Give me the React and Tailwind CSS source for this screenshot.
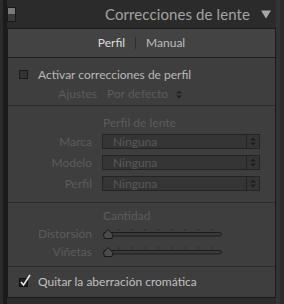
import React from "react";

const Updown = ({ color = "#1a1a1a" }) => (
  <svg width="6" height="9" viewBox="0 0 6 9">
    <path d="M0 3.5 L3 0.5 L6 3.5 Z" fill={color} />
    <path d="M0 5.5 L3 8.5 L6 5.5 Z" fill={color} />
  </svg>
);

const Select = () => (
  <div className="flex h-[15px] w-[158px] items-stretch border border-[#242424] bg-[#353535]">
    <div className="flex flex-1 items-center pl-[10px] text-[12px] leading-none text-[#595959]">Ninguna</div>
    <div className="flex w-[13px] items-center justify-center border-l border-[#242424]">
      <Updown color="#1e1e1e" />
    </div>
  </div>
);

const Slider = () => {
  const ticks = [];
  for (let i = 0; i < 8; i++) ticks.push(16.5 + i * 13.3);
  return (
    <svg width="122" height="14" viewBox="0 0 122 14">
      {ticks.map((x, i) => (
        <line key={i} x1={x} y1="2" x2={x} y2="4" stroke="#2a2a2a" strokeWidth="1" />
      ))}
      <rect x="1.5" y="5.5" width="118" height="3.5" rx="1.75" fill="#3a3a3a" stroke="#1c1c1c" strokeWidth="1" />
      <path d="M6 2.5 L1.5 7.5 L2.5 11.5 L10 11.5 L11 7.5 Z" fill="#4b4b4b" stroke="#191919" strokeWidth="1" strokeLinejoin="round" />
    </svg>
  );
};

const Row = ({ label, children, h }) => (
  <div className={`flex items-center ${h}`}>
    <div className="w-[84px] text-right text-[12px] text-[#5c5c5c]">{label}</div>
    <div className="ml-[10px] flex items-center">{children}</div>
  </div>
);

const Sep = () => <div className="h-[1px] bg-[#2c2c2c]" />;

export default function App() {
  return (
    <div
      className="relative h-[304px] w-[284px] overflow-hidden bg-[#2b2b2b]"
      style={{ fontFamily: "Lato, 'Open Sans', sans-serif" }}
    >
      <div className="ml-[3px] h-full w-[277px] border-l-[4px] border-[#1b1b1b] border-r-[4px] border-r-[#333333]">
        {/* header */}
        <div className="flex h-[28px] items-center">
          <div className="flex h-[15px] w-[9px] flex-col border border-[#1a1a1a]">
            <div className="h-[6px] bg-[#7a7a7a]" />
            <div className="flex-1 bg-[#3a3a3a]" />
          </div>
          <div className="ml-auto text-[15px] tracking-[0.1px] text-[#a3a3a3]">Correcciones de lente</div>
          <svg className="ml-[11px] mr-[5px]" width="10" height="9" viewBox="0 0 10 9">
            <path d="M0 0.5 L10 0.5 L5 8.5 Z" fill="#a8a8a8" />
          </svg>
        </div>
        {/* panel */}
        <div className="h-[270px] border border-[#1a1a1a] bg-[#3e3e3e]">
          <div className="flex h-[28px] items-center justify-center bg-[#434343] text-[12px]">
            <span className="text-[#dcdcdc]">Perfil</span>
            <span className="mx-[10px] h-[12px] w-[1px] bg-[#2e2e2e]" />
            <span className="text-[#bdbdbd]">Manual</span>
          </div>
          <div className="h-[1px] bg-[#1e1e1e]" />
          <div className="h-[47px]">
            <div className="flex h-[29px] items-center pt-[4px] pl-[11px]">
              <div className="h-[9px] w-[9px] border border-[#1a1a1a] bg-[#333333]" />
              <span className="ml-[10px] text-[12px] text-[#b9b9b9]">Activar correcciones de perfil</span>
            </div>
            <div className="flex h-[14px] items-center text-[12px] text-[#5c5c5c]">
              <span className="w-[89px] text-right">Ajustes</span>
              <span className="ml-[10px]">Por defecto</span>
              <span className="ml-[8px] flex items-center"><Updown color="#222222" /></span>
            </div>
          </div>
          <Sep />
          <div className="h-[96px]">
            <div className="flex h-[25px] items-center pt-[8px] pl-[95px] text-[12px] text-[#5c5c5c]">Perfil de lente</div>
            <Row label="Marca" h="h-[21px]"><Select /></Row>
            <Row label="Modelo" h="h-[21px]"><Select /></Row>
            <Row label="Perfil" h="h-[21px]"><Select /></Row>
          </div>
          <Sep />
          <div className="h-[63px]">
            <div className="flex h-[22px] items-center pt-[4px] pl-[95px] text-[12px] text-[#5c5c5c]">Cantidad</div>
            <Row label="Distorsión" h="h-[18px]"><Slider /></Row>
            <Row label="Viñetas" h="h-[18px]"><Slider /></Row>
          </div>
          <Sep />
          <div className="flex h-[30px] items-center pl-[11px]">
            <div className="relative h-[9px] w-[9px] border border-[#111] bg-[#1f1f1f]">
              <svg className="absolute -left-[1px] -top-[5px]" width="14" height="14" viewBox="0 0 14 14">
                <path d="M2 8 L4.5 11 L11 1" fill="none" stroke="#e8e8e8" strokeWidth="1.6" />
              </svg>
            </div>
            <span className="ml-[10px] text-[12px] text-[#c0c0c0]">Quitar la aberración cromática</span>
          </div>
        </div>
      </div>
    </div>
  );
}
